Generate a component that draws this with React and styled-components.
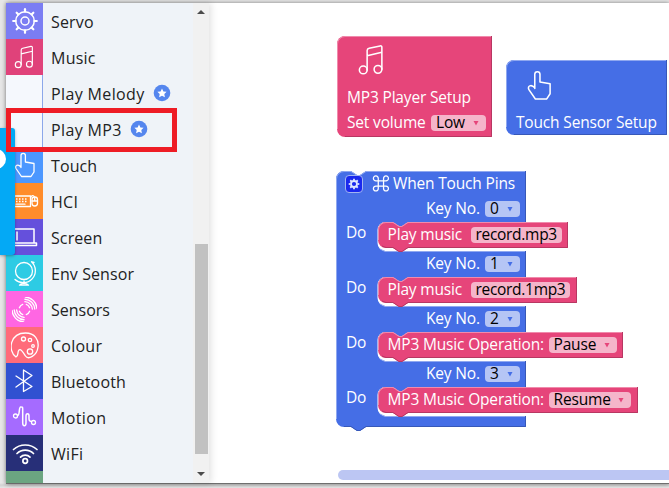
import React from 'react';
import styled, { createGlobalStyle } from 'styled-components';

const PINK = { fill: '#e6457a', light: '#f08bac', dark: '#b83762' };
const BLUE = { fill: '#456ee6', light: '#8fa8f0', dark: '#3758b8' };

const GlobalStyle = createGlobalStyle`
  * { box-sizing: border-box; }
  body {
    margin: 0;
    overflow: hidden;
    background: #e6e6e6;
    font-family: "Open Sans", "Noto Sans", sans-serif;
    font-size: 16px;
  }
`;

const Page = styled.div`
  position: relative;
  width: 669px;
  height: 488px;
  overflow: hidden;
  padding: 3px 0 0 6px;
  background: linear-gradient(#e6e6e6 0 483px, #d2d2d2 485px, #e6e6e6 488px);
`;

const Window = styled.main`
  display: flex;
  height: 481px;
  background: #fff;
  border-bottom: 1px solid #6f6f6f;
  box-shadow: 0 0 4px rgba(0, 0, 0, 0.45);
`;

const Sidebar = styled.nav`
  display: flex;
  flex: none;
  width: 203px;
  height: 480px;
  overflow: hidden;
  background: #eff3f8;
  box-shadow: 2px 0 7px rgba(0, 0, 0, 0.12);
`;

const Categories = styled.div`
  flex: 1;
`;

const Category = styled.div`
  display: flex;
  align-items: center;
  height: 36px;
`;

const IconTile = styled.div`
  display: flex;
  align-items: center;
  justify-content: center;
  flex: none;
  width: 37px;
  height: 36px;
  background: ${(p) => p.$color};
  border-right: ${(p) => (p.$sub ? '1px solid #8ba7ea' : 'none')};
`;

const Label = styled.span`
  margin-left: 8px;
  padding-top: 2px;
  color: #222;
  line-height: 36px;
  white-space: nowrap;
  letter-spacing: ${(p) => p.$ls || 0}px;
`;

const Star = styled.svg`
  margin-left: 8px;
`;

const ScrollTrack = styled.div`
  display: flex;
  flex-direction: column;
  align-items: center;
  width: 16px;
  padding: 7px 0 6px;
  background: #f1f1f1;
`;

const ScrollThumb = styled.div`
  width: 13px;
  height: 210px;
  margin: 230px 0 14px;
  background: #c1c1c1;
`;

const Canvas = styled.section`
  position: relative;
  flex: 1;
`;

const BlockPlace = styled.div`
  position: absolute;
  left: ${(p) => p.$x}px;
  top: ${(p) => p.$y}px;
`;

const BlockBox = styled.div`
  display: grid;
  width: ${(p) => p.$w}px;
  height: ${(p) => p.$h}px;
  color: #fff;
  > * { grid-area: 1 / 1; }
`;

const Shape = styled.svg`
  display: block;
  overflow: visible;
`;

const SetupBody = styled.div`
  display: flex;
  flex-direction: column;
  padding: ${(p) => p.$pad};
`;

const Line = styled.div`
  display: flex;
  align-items: ${(p) => (p.$top ? 'flex-start' : 'center')};
  height: ${(p) => p.$h}px;
  padding-left: ${(p) => p.$left || 0}px;
`;

const Text = styled.span`
  flex: none;
  width: ${(p) => (p.$w ? `${p.$w}px` : 'auto')};
  padding-bottom: 2px;
  font-size: 15.5px;
  line-height: 20px;
  white-space: nowrap;
  letter-spacing: ${(p) => p.$ls ?? -0.17}px;
`;

const Pill = styled.span`
  display: flex;
  align-items: center;
  justify-content: space-between;
  width: ${(p) => p.$w}px;
  height: 16.500px;
  padding: 0 ${(p) => (p.$plain ? 5 : 7)}px 0 5px;
  border-radius: 4px;
  background: ${(p) => (p.$pink ? '#f5b5ca' : '#b5c5f5')};
  color: #000;
`;

const EventBody = styled.div`
  display: flex;
  flex-direction: column;
`;

const GearBadge = styled.span`
  display: flex;
  align-items: center;
  justify-content: center;
  width: 18px;
  height: 18px;
  margin-right: 9px;
  border: 1px solid #a2b5f0;
  border-radius: 4px;
  background: #1a29ee;
`;

const HorizontalBar = styled.div`
  position: absolute;
  left: 129px;
  right: 0;
  top: 467px;
  height: 10px;
  border-radius: 5px 0 0 5px;
  background: #bcc6f3;
`;

const SelectedFrame = styled.div`
  position: absolute;
  left: 6px;
  top: 108px;
  width: 171px;
  height: 44px;
  border: 5px solid #ee1c25;
`;

const SideTab = styled.div`
  position: absolute;
  left: 0;
  top: 128px;
  width: 15px;
  height: 127px;
  overflow: hidden;
  border-radius: 0 3px 3px 0;
  background: #04a9f5;
  box-shadow: 0 1px 3px rgba(0, 0, 0, 0.3);
`;

const TabKnob = styled.div`
  width: 22px;
  height: 20px;
  margin: 21px 0 0 -16px;
  border-radius: 10px;
  background: #fff;
`;

function Glyph({ children, size = 28, sw = 1.3 }) {
  return (
    <svg width={size} height={size} viewBox="0 0 28 28" fill="none" stroke="#fff" strokeWidth={sw} strokeLinecap="round" strokeLinejoin="round">
      {children}
    </svg>
  );
}

const Note = (
  <>
    <circle cx="7" cy="22" r="3.300" />
    <circle cx="19.500" cy="21.500" r="3.300" />
    <path d="M10.300 22V5.500Q10.300 4 12 3.600L21.300 1.600Q22.800 1.400 22.800 3V21.500M10.300 10l12.500-3" />
  </>
);

const Hand = <path d="M10 16.500V4.500a2.200 2.200 0 0 1 4.400 0V11l8.600 1.500V21l-3 4.500h-9.500L5 17.500c-1.600-3 2-5 5-1.500" />;

const GEAR_TEETH = [0, 45, 90, 135, 180, 225, 270, 315];

const icons = {
  servo: (
    <>
      <circle cx="14" cy="14" r="9.300" strokeWidth="1.500" />
      <circle cx="14" cy="14" r="4" strokeWidth="1.500" />
      {GEAR_TEETH.map((a) => <path key={a} d="M14 4.700V2.200" strokeWidth="2.200" transform={`rotate(${a} 14 14)`} />)}
    </>
  ),
  music: Note,
  touch: Hand,
  hci: (
    <>
      <rect x="-1" y="9" width="20.500" height="10.500" />
      <path d="M2 12h14M2 14.500h14" strokeDasharray="1.500 1.500" strokeWidth="1.700" strokeLinecap="butt" />
      <path d="M5 17.200h9M19.500 11c1-3 3-3 4-1" />
      <rect x="21" y="10" width="5.500" height="9" rx="2.700" />
      <path d="M21 14h5.500M23.700 10.500V14" />
    </>
  ),
  screen: <path d="M2 20V6h21v14M0 20h25.500v2.500H0ZM6 9v8" strokeWidth="1.500" />,
  env: (
    <>
      <circle cx="13" cy="12" r="8.500" />
      <path d="M20.500 2.800A12 12 0 0 1 4 20.500M13 22v2.500M8.500 26.200c2-2.500 7-2.500 9 0ZM21 3l2 .5" />
    </>
  ),
  sensors: (
    <g strokeWidth="1.500">
      <path d="M12 8.300A6 6 0 0 0 8.300 12M8.300 16A6 6 0 0 0 12 19.700M16 19.700A6 6 0 0 0 19.700 16M16 8.300A6 6 0 0 1 19.700 12" />
      <path d="M14.500 5.200A8.800 8.800 0 0 1 22.800 13.500M14.500 2.500A11.500 11.500 0 0 1 25.500 13.500M15 0A14 14 0 0 1 28 13" />
      <path d="M13.500 22.800A8.800 8.800 0 0 1 5.200 14.500M13.500 25.500A11.500 11.500 0 0 1 2.500 14.500M13 28A14 14 0 0 1 0 15" />
    </g>
  ),
  colour: (
    <>
      <path d="M5 26C-4 19-.5 2 14.500 2 24 2 28 9 27 16c-1 9-10 13-12.500 9-2-3-4.500-7.500-6.500-6-2 2 0 6-3 7Z" />
      <circle cx="12.500" cy="8" r="2" />
      <circle cx="19" cy="9" r="1.700" />
      <circle cx="22" cy="15" r="1.300" />
      <circle cx="19" cy="20.500" r="2.700" />
    </>
  ),
  bluetooth: <path d="M5 9l16 10.500-8.500 5V3L21 8.500 5 20" />,
  motion: (
    <>
      <circle cx="4.500" cy="13" r="2" />
      <circle cx="22.500" cy="19.500" r="2" />
      <path d="M6.500 12.500c2.700 0 1-8.500 3.200-8.500s2 0 2 3v13c0 3.500 3.300 3.500 3.300 0v-7c0-3 3-3 3 0 0 3-.5 5.500 2.500 5.500" strokeWidth="1.500" />
    </>
  ),
  wifi: (
    <>
      <path d="M2.500 10.500c6.500-6 17-6 23.500 0M6 14.500c4.500-4.500 12-4.500 16.500 0M9.500 18.200c2.500-2.700 7-2.700 9.500 0" strokeWidth="1.700" />
      <circle cx="14.200" cy="22" r="2.300" strokeWidth="1.700" />
    </>
  ),
};

const categories = [
  { name: 'Servo', icon: 'servo', color: '#7b7df3', ls: 0.15 },
  { name: 'Music', icon: 'music', color: '#e0427a', ls: 0.25 },
  { name: 'Play Melody', sub: true, color: '#f5f8fd', ls: 0.37 },
  { name: 'Play MP3', sub: true, color: '#f5f8fd', ls: 0.37 },
  { name: 'Touch', icon: 'touch', color: '#4c97ff', ls: 0.1 },
  { name: 'HCI', icon: 'hci', color: '#ff8c2b', ls: 0.3 },
  { name: 'Screen', icon: 'screen', color: '#6550dc', ls: 0.1 },
  { name: 'Env Sensor', icon: 'env', color: '#2dcbe4', ls: 0.08 },
  { name: 'Sensors', icon: 'sensors', color: '#ff66e3', ls: 0 },
  { name: 'Colour', icon: 'colour', color: '#ff6b7a', ls: 0.25 },
  { name: 'Bluetooth', icon: 'bluetooth', color: '#3151d1', ls: 0.15 },
  { name: 'Motion', icon: 'motion', color: '#a56bff', ls: 0.35 },
  { name: 'WiFi', icon: 'wifi', color: '#272f78', ls: 0.3 },
];

function Arrow({ color }) {
  return (
    <svg width="6" height="6" viewBox="0 0 6 6">
      <path d="M0.500 1h5L3 5.500Z" fill={color} />
    </svg>
  );
}

function Dropdown({ value, w, pink, ls }) {
  return (
    <Pill $w={w} $pink={pink}>
      <Text $ls={ls}>{value}</Text>
      <Arrow color={pink ? PINK.fill : BLUE.fill} />
    </Pill>
  );
}

function SetupShape({ w, h, tone }) {
  return (
    <Shape width={w} height={h}>
      <path d={`M0 8A8 8 0 0 1 8 0H${w}V${h}H8A8 8 0 0 1 0 ${h - 8}Z`} fill={tone.fill} />
      <path d={`M.5 ${h - 8}V8A7.500 7.500 0 0 1 8 .5H${w - 1}`} fill="none" stroke={tone.light} />
      <path d={`M8 ${h - 0.5}H${w - 0.5}V0`} fill="none" stroke={tone.dark} />
    </Shape>
  );
}

function StatementShape({ w }) {
  const h = 26;
  return (
    <Shape width={w} height={h}>
      <path d={`M0 8A8 8 0 0 1 8 0H15l6 4h3l6-4H${w}V${h}H30l-6 4h-3l-6-4H8A8 8 0 0 1 0 ${h - 8}Z`} fill={PINK.fill} />
      <path d={`M.5 ${h - 8}V8A7.500 7.500 0 0 1 8 .5H15l6 4h3l6-4H${w - 1}`} fill="none" stroke={PINK.light} />
      <path d={`M4 ${h - 2}l4 1.500H15l6 4h3l6-4H${w - 0.5}V0`} fill="none" stroke={PINK.dark} />
    </Shape>
  );
}

const cavityTops = [51, 106, 161, 216];
const eventOutline =
  'M0 8A8 8 0 0 1 8 0H15l6 4h3l6-4H190' +
  cavityTops
    .map((y) => `V${y}H72l-6 4h-3l-6-4H49.500a8 8 0 0 0-8 8V${y + 21}a8 8 0 0 0 8 8H190`)
    .join('') +
  'V256H30l-6 4h-3l-6-4H8A8 8 0 0 1 0 248Z';

function EventShape() {
  return (
    <Shape width="190" height="260">
      <path d={eventOutline} fill={BLUE.fill} />
      <path d="M.5 248V8A7.500 7.500 0 0 1 8 .5H15l6 4h3l6-4H189" fill="none" stroke={BLUE.light} />
      {cavityTops.map((y) => <path key={y} d={`M44 ${y + 27}l5 2.500H189`} fill="none" stroke={BLUE.light} />)}
      <path d="M189.500 0V51M189.500 80V106M189.500 135V161M189.500 190V216M189.500 245V255.500H30l-6 4h-3l-6-4H8" fill="none" stroke={BLUE.dark} />
    </Shape>
  );
}

const cases = [
  { key: '0', kind: 'play', value: 'record.mp3', w: 190, pill: 91 },
  { key: '1', kind: 'play', value: 'record.1mp3', w: 199, pill: 99 },
  { key: '2', kind: 'operate', value: 'Pause', w: 245, pill: 68 },
  { key: '3', kind: 'operate', value: 'Resume', w: 260, pill: 82 },
];

function Statement({ item }) {
  return (
    <BlockBox $w={item.w} $h={26}>
      <StatementShape w={item.w} />
      <Line $h={26} $left={10}>
        {item.kind === 'play' ? (
          <>
            <Text $w={83}>Play music</Text>
            <Pill $w={item.pill} $pink $plain><Text $ls={-0.3}>{item.value}</Text></Pill>
          </>
        ) : (
          <>
            <Text $w={161}>MP3 Music Operation:</Text>
            <Dropdown value={item.value} w={item.pill} pink />
          </>
        )}
      </Line>
    </BlockBox>
  );
}

function CommandIcon() {
  return (
    <svg width="21" height="18" viewBox="0 0 19 17" fill="none" stroke="#fff" strokeWidth="1.200">
      <path d="M5.500 5.500h5v5h-5ZM5.500 5.500H3.300a2.300 2.300 0 1 1 2.200-2.200ZM10.500 5.500V3.300a2.300 2.300 0 1 1 2.200 2.200ZM10.500 10.500h2.200a2.300 2.300 0 1 1-2.200 2.200ZM5.500 10.500v2.200a2.300 2.300 0 1 1-2.200-2.200Z" />
    </svg>
  );
}

export default function App() {
  return (
    <>
      <GlobalStyle />
      <Page>
        <Window>
          <Sidebar>
            <Categories>
              {categories.map((c) => (
                <Category key={c.name}>
                  <IconTile $color={c.color} $sub={c.sub}>
                    {c.icon && <Glyph size={c.icon === 'sensors' || c.icon === 'music' ? 25 : 28}>{icons[c.icon]}</Glyph>}
                  </IconTile>
                  <Label $ls={c.ls}>{c.name}</Label>
                  {c.sub && (
                    <Star width="18" height="18" viewBox="0 0 18 18">
                      <circle cx="9" cy="9" r="8.300" fill="#5586ee" />
                      <path d="M9 4.500l1.400 2.900 3.200.4-2.300 2.200.6 3.200L9 11.700l-2.900 1.500.6-3.200-2.300-2.200 3.200-.4Z" fill="#fff" />
                    </Star>
                  )}
                </Category>
              ))}
              <IconTile $color="#6ba581" />
            </Categories>
            <ScrollTrack>
              <svg width="8" height="4" viewBox="0 0 8 4"><path d="M0 4L4 0l4 4Z" fill="#4b4b4b" /></svg>
              <ScrollThumb />
              <svg width="8" height="8" viewBox="0 0 8 8"><path d="M0 4h8L4 8Z" fill="#4b4b4b" /></svg>
            </ScrollTrack>
          </Sidebar>
          <Canvas>
            <BlockPlace $x={128} $y={33}>
              <BlockBox $w={155} $h={101}>
                <SetupShape w={155} h={101} tone={PINK} />
                <SetupBody $pad="8px 0 0 10px">
                  <Line $h={41} $left={8} $top><Glyph size={33}>{Note}</Glyph></Line>
                  <Line $h={25}><Text>MP3 Player Setup</Text></Line>
                  <Line $h={26}>
                    <Text $w={84}>Set volume</Text>
                    <Dropdown value="Low" w={55} pink />
                  </Line>
                </SetupBody>
              </BlockBox>
            </BlockPlace>
            <BlockPlace $x={297} $y={57}>
              <BlockBox $w={161} $h={75}>
                <SetupShape w={161} h={75} tone={BLUE} />
                <SetupBody $pad="9px 0 0 10px">
                  <Line $h={41} $left={7} $top><Glyph size={33}>{Hand}</Glyph></Line>
                  <Line $h={25}><Text>Touch Sensor Setup</Text></Line>
                </SetupBody>
              </BlockBox>
            </BlockPlace>
            <BlockPlace $x={127} $y={168}>
              <BlockBox $w={190} $h={260}>
                <EventShape />
                <EventBody>
                  <Line $h={25} $left={9}>
                    <GearBadge>
                      <svg width="12" height="12" viewBox="0 0 12 12" fill="none" stroke="#dfe6ff">
                        <circle cx="6" cy="6" r="3" strokeWidth="1.800" />
                        {GEAR_TEETH.map((a) => <path key={a} d="M6 2.500V.7" strokeWidth="1.800" transform={`rotate(${a} 6 6)`} />)}
                      </svg>
                    </GearBadge>
                    <CommandIcon />
                    <Text>When Touch Pins</Text>
                  </Line>
                  {cases.map((item) => (
                    <React.Fragment key={item.key}>
                      <Line $h={26} $left={90}>
                        <Text $w={59}>Key No.</Text>
                        <Dropdown value={item.key} w={35} />
                      </Line>
                      <Line $h={29} $left={10} $top>
                        <Text $w={31.5}>Do</Text>
                        <Statement item={item} />
                      </Line>
                    </React.Fragment>
                  ))}
                </EventBody>
              </BlockBox>
            </BlockPlace>
            <HorizontalBar />
          </Canvas>
        </Window>
        <SideTab><TabKnob /></SideTab>
        <SelectedFrame />
      </Page>
    </>
  );
}
